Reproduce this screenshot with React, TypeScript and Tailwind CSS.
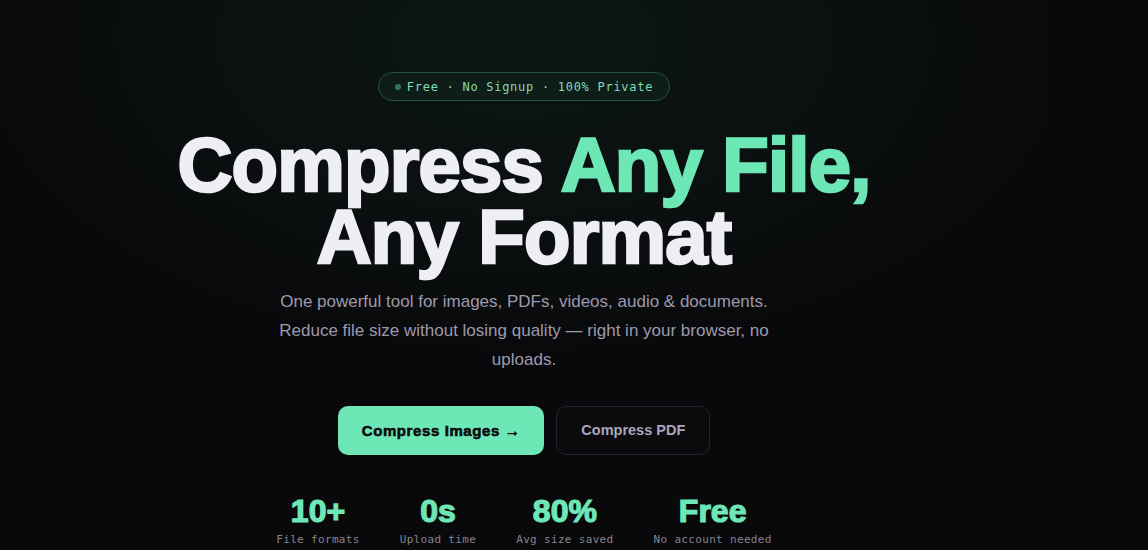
const stats = [
  { value: '10+', label: 'File formats' },
  { value: '0s', label: 'Upload time' },
  { value: '80%', label: 'Avg size saved' },
  { value: 'Free', label: 'No account needed' },
];

const sans = "font-['Liberation_Sans',Arial,sans-serif]";
const mono = "font-['DejaVu_Sans_Mono','Liberation_Mono',monospace]";

export default function App() {
  return (
    <div className="min-h-[550px] w-full bg-[#09090b] overflow-hidden">
      <div className="flex">
        {/* Hero */}
        <section className="relative w-[1048px] flex flex-col items-center pt-[72px] pb-10 bg-[radial-gradient(ellipse_560px_320px_at_50%_40px,rgba(52,211,153,0.07),transparent)]">
          <div className="flex items-center gap-1.5 h-[29px] px-4 rounded-full border border-[#26503f] bg-[#0f1d18]">
            <span className="w-[6px] h-[6px] rounded-full bg-[#3b7560]" />
            <span className={`${mono} text-[12px] tracking-[0.06em] text-[#7fdcb6]`}>
              Free · No Signup · 100% Private
            </span>
          </div>

          <h1
            className={`${sans} mt-[28px] text-center font-bold text-[76px] leading-[72px] tracking-[-0.01em] text-[#eeeef4] [-webkit-text-stroke:2.6px_currentColor] [paint-order:stroke_fill]`}
          >
            Compress <span className="text-[#6ee7b7]">Any File,</span>
            <br />
            Any Format
          </h1>

          <p className={`${sans} mt-[15px] max-w-[500px] text-center text-[17px] leading-[28.8px] text-[#9d99ad]`}>
            One powerful tool for images, PDFs, videos, audio &amp; documents. Reduce file size without
            losing quality — right in your browser, no uploads.
          </p>

          <div className="mt-8 flex gap-3">
            <button
              className={`${sans} h-[49px] px-6 rounded-[10px] bg-[#6ee7b7] text-[15px] font-bold tracking-[0.04em] text-[#0b0b0e] [-webkit-text-stroke:0.6px_currentColor]`}
            >
              Compress Images →
            </button>
            <button
              className={`${sans} h-[49px] px-6 rounded-[10px] border border-[#25242c] bg-[#0b0b0e] text-[14.5px] font-bold text-[#aaa6bd]`}
            >
              Compress PDF
            </button>
          </div>

          {/* Stats */}
          <div className="mt-10 flex gap-10">
            {stats.map((s) => (
              <div key={s.label} className="flex flex-col items-center">
                <div
                  className={`${sans} text-[32px] leading-[32px] font-bold text-[#6ee7b7] [-webkit-text-stroke:1.2px_currentColor]`}
                >
                  {s.value}
                </div>
                <div className={`${mono} mt-[5px] text-[11px] tracking-[0.03em] text-[#85838f]`}>{s.label}</div>
              </div>
            ))}
          </div>
        </section>
        <div className="flex-1" />
      </div>
    </div>
  );
}
